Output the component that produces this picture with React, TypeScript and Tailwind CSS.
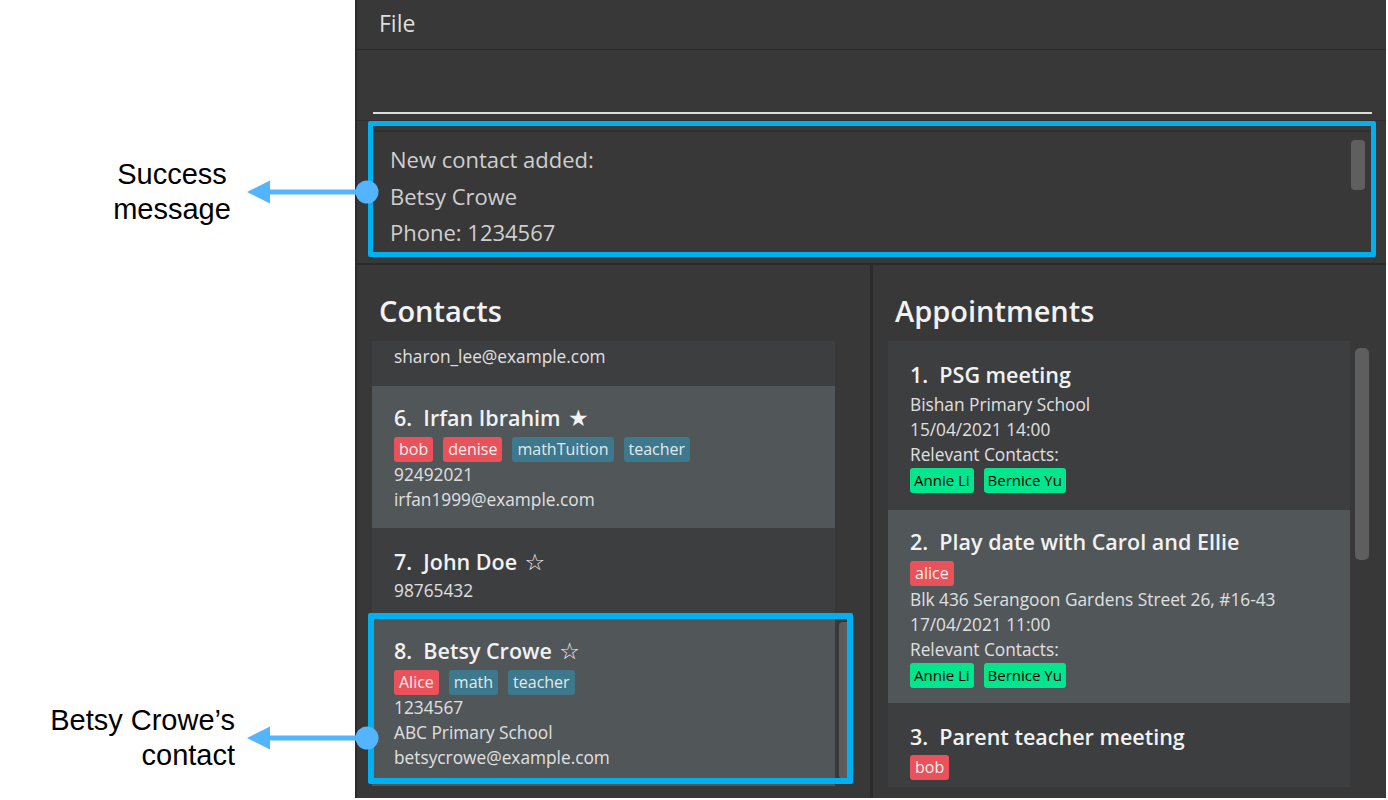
import React from 'react'

type Tag = { label: string; tone: 'red' | 'teal' | 'green' }

const tagTone = {
  red: 'bg-[#e9525a] text-[#fbeeee] text-[16px] px-[5px]',
  teal: 'bg-[#3d788c] text-[#e4e8ea] text-[16px] px-[5px]',
  green: 'bg-[#03e68e] text-black text-[15px] px-[4px]',
}

function Chip({ tag }: { tag: Tag }) {
  return <span className={`h-[25px] rounded-[3px] leading-[25px] ${tagTone[tag.tone]}`}>{tag.label}</span>
}

function ChipRow({ tags, className = '' }: { tags: Tag[]; className?: string }) {
  return (
    <div className={`flex gap-[10px] ${className}`}>
      {tags.map((t) => (
        <Chip key={t.label} tag={t} />
      ))}
    </div>
  )
}

function Title({ n, text, star }: { n: number; text: string; star?: string }) {
  return (
    <div className="h-[30px] leading-[30px] text-[21.5px] font-semibold text-[#f2f2f2] whitespace-pre">
      {n}.  {text}
      {star && <span className="font-normal font-['DejaVu_Sans',sans-serif] text-[23px]"> {star}</span>}
    </div>
  )
}

function Line({ children }: { children: React.ReactNode }) {
  return <div className="h-[25px] leading-[25px] text-[17.3px] text-[#e0e0e0] whitespace-nowrap">{children}</div>
}

// callout arrow: circle on the right, head on the left
function Callout({ top, lines, align }: { top: number; lines: string[]; align: 'center' | 'right' }) {
  return (
    <div className="absolute left-0 flex items-center" style={{ top }}>
      <div
        className={`w-[240px] text-[29px] leading-[35px] text-black font-['Liberation_Sans',Arial,sans-serif] ${
          align === 'center' ? 'text-center pl-[104px]' : 'text-right pr-[5px]'
        }`}
      >
        {lines.map((l) => (
          <div key={l}>{l}</div>
        ))}
      </div>
      <svg width="135" height="26" viewBox="0 0 135 26" className="ml-[6px]">
        <polygon points="1,13 24,1.5 24,24.5" fill="#53b4ff" />
        <rect x="22" y="10.5" width="100" height="5" fill="#53b4ff" />
        <circle cx="121" cy="13" r="11.5" fill="#53b4ff" />
      </svg>
    </div>
  )
}

export default function App() {
  return (
    <div className="relative w-[1388px] h-[800px] bg-white flex font-['Open_Sans','Noto_Sans',sans-serif]">
      <div className="w-[355px] shrink-0" />

      {/* app window */}
      <div className="w-[1031px] h-[798px] bg-[#383838] border-l-2 border-[#2b2b2b] flex flex-col">
        <div className="h-[50px] shrink-0 border-b border-[#2a2a2a] flex items-center pl-[22px] pb-[2px] text-[23px] text-[#dedede]">
          File
        </div>

        <div className="h-[71px] shrink-0 flex flex-col justify-end pb-[6px] border-b border-[#2e2e2e]">
          <div className="h-[2px] ml-[16px] mr-[14px] bg-[#dcdcdc]" />
        </div>

        <div className="h-[144px] shrink-0 px-[17px] pt-[9px] pb-[8px] border-b-2 border-[#2b2b2b]">
          <div className="h-full border-t-2 border-[#2f2f2f] flex">
            <div className="flex-1 pl-[16px] pt-[9px] text-[22px] leading-[36.5px] text-[#cfcfcf]">
              <div>New contact added:</div>
              <div>Betsy Crowe</div>
              <div>Phone: 1234567</div>
            </div>
            <div className="w-[14px] mr-[4px] pt-[8px]">
              <div className="h-[50px] rounded-[4px] bg-[#5f5f5f]" />
            </div>
          </div>
        </div>

        <div className="flex-1 flex min-h-0">
          {/* contacts */}
          <div className="w-[513px] flex flex-col pt-[27px]">
            <div className="pl-[22px] h-[37px] leading-[37px] text-[29px] font-semibold text-[#f2f2f2]">Contacts</div>
            <div className="mt-[12px] flex pl-[15px] h-[446px] overflow-hidden">
              <div className="w-[463px] flex flex-col">
                <div className="h-[45px] shrink-0 bg-[#3c3e40] px-[22px] pt-[3px]">
                  <Line>sharon_lee@example.com</Line>
                </div>
                <div className="h-[142px] shrink-0 bg-[#515659] px-[22px] pt-[17px]">
                  <Title n={6} text="Irfan Ibrahim" star="★" />
                  <ChipRow
                    className="mt-[4px]"
                    tags={[
                      { label: 'bob', tone: 'red' },
                      { label: 'denise', tone: 'red' },
                      { label: 'mathTuition', tone: 'teal' },
                      { label: 'teacher', tone: 'teal' },
                    ]}
                  />
                  <Line>92492021</Line>
                  <Line>irfan1999@example.com</Line>
                </div>
                <div className="h-[86px] shrink-0 bg-[#3c3e40] px-[22px] pt-[19px]">
                  <Title n={7} text="John Doe" star="☆" />
                  <div className="mt-[1px]">
                    <Line>98765432</Line>
                  </div>
                </div>
                <div className="h-[172px] shrink-0 bg-[#515659] px-[22px] pt-[22px]">
                  <Title n={8} text="Betsy Crowe" star="☆" />
                  <ChipRow
                    className="mt-[4px]"
                    tags={[
                      { label: 'Alice', tone: 'red' },
                      { label: 'math', tone: 'teal' },
                      { label: 'teacher', tone: 'teal' },
                    ]}
                  />
                  <Line>1234567</Line>
                  <Line>ABC Primary School</Line>
                  <Line>betsycrowe@example.com</Line>
                </div>
              </div>
              <div className="ml-[4px] w-[14px] pt-[281px]">
                <div className="h-[157px] rounded-[4px] bg-[#5b5b5b]" />
              </div>
            </div>
          </div>

          <div className="w-[3px] bg-[#2b2b2b]" />

          {/* appointments */}
          <div className="w-[513px] flex flex-col pt-[27px]">
            <div className="pl-[22px] h-[37px] leading-[37px] text-[29px] font-semibold text-[#f2f2f2]">Appointments</div>
            <div className="mt-[12px] flex pl-[15px] h-[446px] overflow-hidden">
              <div className="w-[462px] flex flex-col">
                <div className="h-[169px] shrink-0 bg-[#3c3e40] px-[22px] pt-[19px]">
                  <Title n={1} text="PSG meeting" />
                  <div className="mt-[2px]">
                    <Line>Bishan Primary School</Line>
                    <Line>15/04/2021 14:00</Line>
                    <Line>Relevant Contacts:</Line>
                  </div>
                  <ChipRow
                    className="mt-[1px]"
                    tags={[
                      { label: 'Annie Li', tone: 'green' },
                      { label: 'Bernice Yu', tone: 'green' },
                    ]}
                  />
                </div>
                <div className="h-[193px] shrink-0 bg-[#515659] px-[22px] pt-[17px]">
                  <Title n={2} text="Play date with Carol and Ellie" />
                  <ChipRow className="mt-[4px]" tags={[{ label: 'alice', tone: 'red' }]} />
                  <div className="mt-[1px]">
                    <Line>Blk 436 Serangoon Gardens Street 26, #16-43</Line>
                    <Line>17/04/2021 11:00</Line>
                    <Line>Relevant Contacts:</Line>
                  </div>
                  <ChipRow
                    className="mt-[1px]"
                    tags={[
                      { label: 'Annie Li', tone: 'green' },
                      { label: 'Bernice Yu', tone: 'green' },
                    ]}
                  />
                </div>
                <div className="h-[170px] shrink-0 bg-[#3c3e40] px-[22px] pt-[19px]">
                  <Title n={3} text="Parent teacher meeting" />
                  <ChipRow className="mt-[3px]" tags={[{ label: 'bob', tone: 'red' }]} />
                  <div className="mt-[2px]">
                    <Line>Blk 30 Geylang Street 29, #06-40</Line>
                  </div>
                </div>
              </div>
              <div className="ml-[5px] w-[14px] pt-[7px]">
                <div className="h-[212px] rounded-[5px] bg-[#5e5e5e]" />
              </div>
            </div>
          </div>
        </div>
      </div>

      {/* highlight boxes */}
      <div className="absolute left-[368px] top-[121px] w-[1008px] h-[136px] border-[5px] border-[#00b0f0] rounded-[2px]" />
      <div className="absolute left-[368px] top-[613px] w-[485px] h-[171px] border-[6px] border-[#00b0f0] rounded-[2px]" />

      {/* callouts */}
      <Callout top={157} lines={['Success', 'message']} align="center" />
      <Callout top={703} lines={['Betsy Crowe’s', 'contact']} align="right" />
    </div>
  )
}
